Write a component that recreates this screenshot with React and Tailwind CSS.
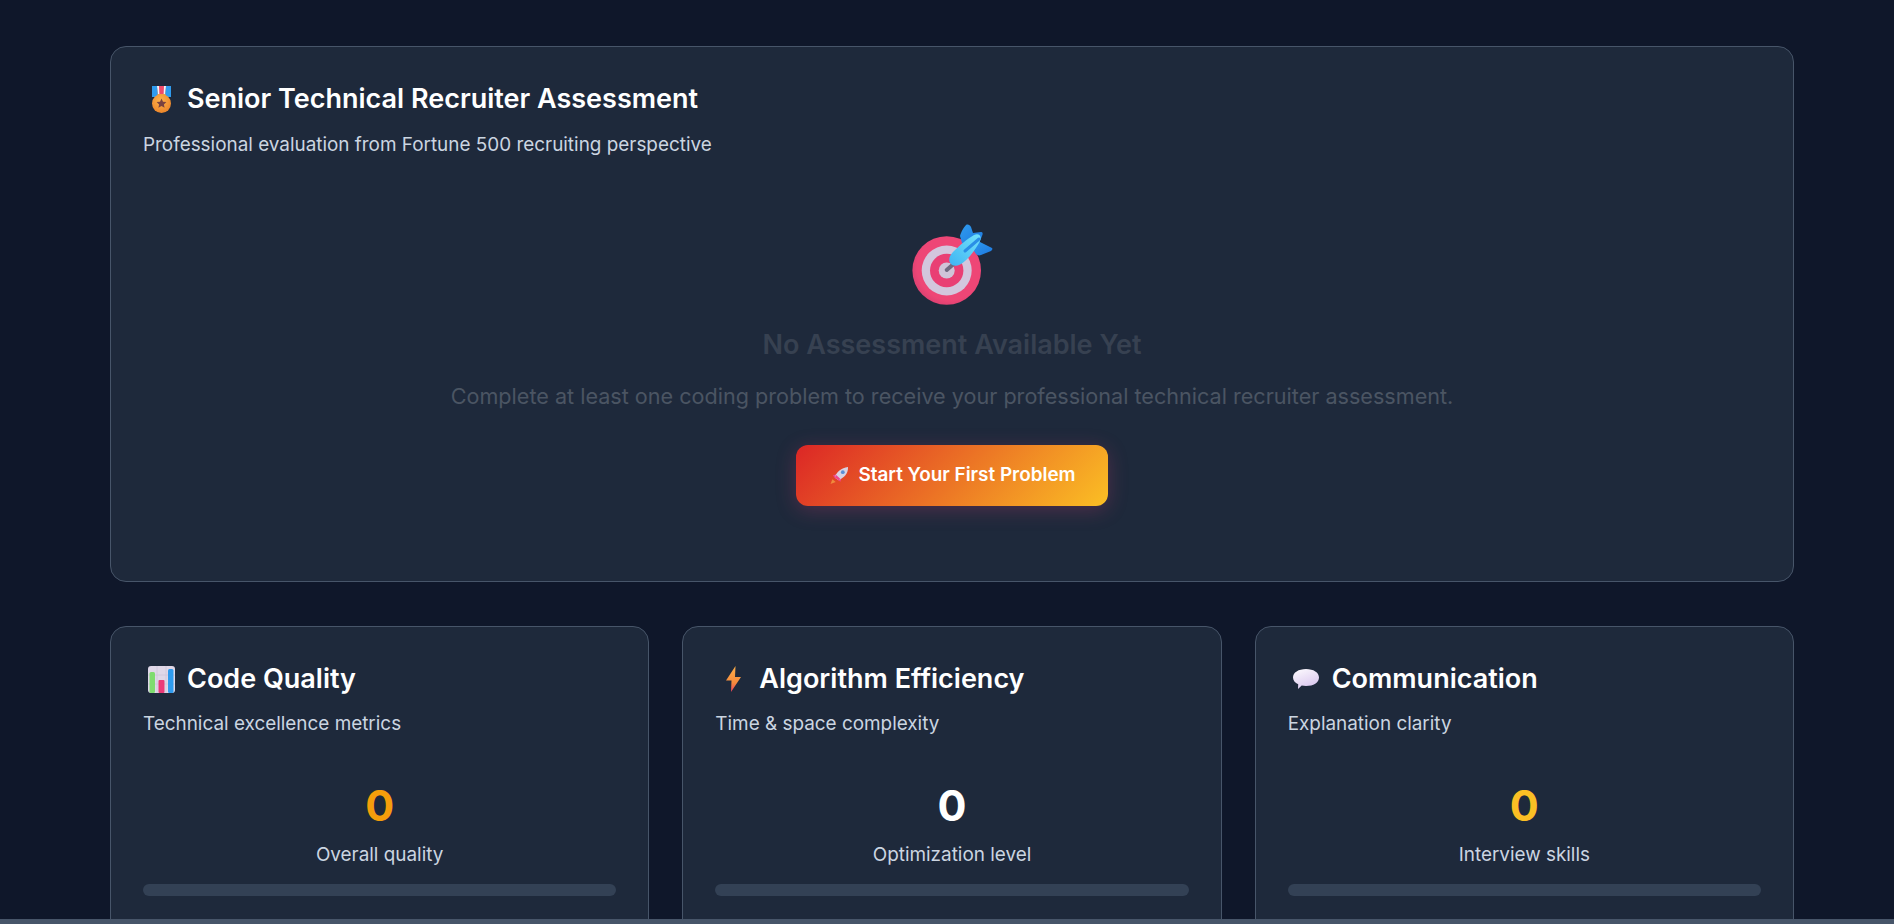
import React from "react";
const F = { fontFamily: 'Inter, sans-serif' };

function Medal() {
  return (
    <svg width="27" height="27" viewBox="0 0 27 27" className="shrink-0">
      <defs>
        <radialGradient id="mg" cx="0.45" cy="0.35" r="0.75"><stop offset="0" stopColor="#fdb24a" /><stop offset="1" stopColor="#ea7f26" /></radialGradient>
      </defs>
      <path d="M4 0h5l1 11H4z" fill="#2f9bee" />
      <path d="M18 0h5v11h-6z" fill="#2f9bee" />
      <path d="M9 0h9l-1 11h-7z" fill="#f4f1f6" />
      <path d="M11 0h5l-.5 11h-4z" fill="#ef4a6a" />
      <rect x="9.500" y="8" width="8" height="4" rx="1" fill="#f0a13c" />
      <circle cx="13.500" cy="17.500" r="9.500" fill="url(#mg)" />
      <path d="M13.500 12.500l1.500 3.200 3.400.4-2.500 2.300.7 3.400-3.100-1.700-3.100 1.700.7-3.400-2.500-2.300 3.400-.4z" fill="#7a4240" />
    </svg>
  );
}
function Target() {
  return (
    <svg width="84" height="82" viewBox="0 0 84 82">
      <defs>
        <linearGradient id="dg" x1="0" y1="1" x2="1" y2="0"><stop offset="0" stopColor="#3fb4f2" /><stop offset="1" stopColor="#72e2fb" /></linearGradient>
        <linearGradient id="fl" x1="0" y1="0" x2="1" y2="1"><stop offset="0" stopColor="#2f9bee" /><stop offset="1" stopColor="#1d78e0" /></linearGradient>
        <radialGradient id="tg" cx="0.550" cy="0.450" r="0.600"><stop offset="0.800" stopColor="#ee4676" /><stop offset="1" stopColor="#d83f70" /></radialGradient>
      </defs>
      <circle cx="36.700" cy="46.500" r="34.300" fill="url(#tg)" />
      <circle cx="36.700" cy="46.500" r="25" fill="#d3c6dd" />
      <circle cx="36.700" cy="46.500" r="16.700" fill="#e93f74" />
      <circle cx="36.700" cy="46.500" r="8" fill="#cfc4d8" />
      <path d="M36.700 46l8-7" stroke="#6f6a80" strokeWidth="4" strokeLinecap="round" />
      <path d="M50 12C51 8 54 3 56 1c2-1 4 0 5 2l2 6 8-1c2 0 2 2 1 4l-4 10-16-3z" fill="url(#fl)" />
      <path d="M68 17l14 7c1 1 0 2-1 3l-10 4c-2 1-4 0-5-1l-4-6z" fill="url(#fl)" />
      <path d="M43 28c6-6 14-13 21-17 5-2 8 1 6 6-3 6-9 15-15 20-5 5-11 6-14 3s-2-8 2-12z" fill="url(#dg)" />
      <path d="M55 27l14-12" stroke="#2a8fe6" strokeWidth="3" strokeLinecap="round" />
    </svg>
  );
}
function Rocket() {
  return (
    <svg width="19" height="17" viewBox="0 0 20 18" className="shrink-0">
      <path d="M0.500 18l2-5 3.500 3z" fill="#f08a3c" />
      <path d="M3 9l6-2.500-3 6z" fill="#f0468a" />
      <path d="M11 15.500l1.500-6.500-6 3.500z" fill="#f0468a" />
      <path d="M5 11C6.500 5.500 12 1 19 0c.5 7-4.500 11.500-10 14z" fill="#d8d2e2" />
      <path d="M5 11l4 3 2-1.400L6.500 8.500z" fill="#f0468a" />
      <circle cx="13.500" cy="5.500" r="2" fill="#5b8fd6" />
    </svg>
  );
}
function Chart() {
  return (
    <svg width="27" height="27" viewBox="0 0 27 27" className="shrink-0">
      <rect width="27" height="27" rx="3" fill="#e0d8e8" />
      <path d="M9 0v27M18 0v27M0 9h27M0 18h27" stroke="#cfc6da" strokeWidth="0.800" />
      <rect x="1.500" y="6" width="5.500" height="21" rx="1.500" fill="#7fdc6f" />
      <rect x="10.500" y="14" width="6" height="13" rx="1" fill="#ea3a78" />
      <rect x="20" y="3" width="5.500" height="24" rx="1.500" fill="#2f9bee" />
    </svg>
  );
}
function Bolt() {
  return (
    <svg width="15" height="26" viewBox="0 0 15 26" className="shrink-0">
      <defs>
        <linearGradient id="bg" x1="0.500" y1="0" x2="0.500" y2="1"><stop offset="0" stopColor="#fdb04a" /><stop offset="0.650" stopColor="#f58a3c" /><stop offset="1" stopColor="#ea3f5e" /></linearGradient>
      </defs>
      <path d="M9.500 0L0 14.500h5.500L5 26l10-15H9z" fill="url(#bg)" />
    </svg>
  );
}
function Bubble() {
  return (
    <svg width="26" height="20" viewBox="0 0 26 20" className="shrink-0">
      <defs>
        <linearGradient id="bb" x1="0.200" y1="0" x2="0.700" y2="1"><stop offset="0" stopColor="#fbf8fd" /><stop offset="1" stopColor="#d8c4ee" /></linearGradient>
      </defs>
      <path d="M13 0c7.500 0 13 3.500 13 8.500S20.500 17 13 17c-1.500 0-3 0-4.300-.4L5 20l.2-4.800C2 13.800 0 11.400 0 8.500 0 3.500 5.500 0 13 0z" fill="url(#bb)" />
    </svg>
  );
}

function Card({ icon, title, sub, value, color, label }) {
  return (
    <div className="flex-1 min-w-0 h-[340px] bg-[#1e293b] border border-[#475569] rounded-2xl p-8">
      <h3 className="flex items-center h-[39px] pt-px text-[27px] font-semibold text-white">
        <span className="w-[44px] flex items-center justify-center pr-[7px]">{icon}</span>
        {title}
      </h3>
      <p className="mt-[11px] text-[18.9px] leading-[30px] text-[#cbd5e1]">{sub}</p>
      <div className="mt-[35px] text-center">
        <div className={`text-[43px] leading-[62px] font-bold ${color}`}>{value}</div>
        <div className="mt-[4px] text-[18.9px] leading-[30px] text-[#cbd5e1]">{label}</div>
      </div>
      <div className="mt-[14px] h-3 rounded-md bg-[#334155]" />
    </div>
  );
}

export default function App() {
  return (
    <div style={F} className="relative h-[924px] overflow-hidden bg-[#0f172a]">
      <div className="ml-[110px] w-[1684px] pt-[46px]">
        <div className="h-[536px] bg-[#1e293b] border border-[#475569] rounded-2xl p-8">
          <h2 className="flex items-center h-[39px] pt-px text-[27px] font-semibold text-white">
            <span className="w-[44px] flex items-center justify-center pr-[7px]"><Medal /></span>
            Senior Technical Recruiter Assessment
          </h2>
          <p className="mt-[12px] text-[18.9px] leading-[30px] text-[#cbd5e1]">Professional evaluation from Fortune 500 recruiting perspective</p>
          <div className="flex flex-col items-center pt-[64px]">
            <Target />
            <div className="mt-[19px] text-[27px] leading-[40px] font-semibold text-[#374151]">No Assessment Available Yet</div>
            <div className="mt-[15px] text-[21.6px] leading-[32px] text-[#4b5563]">Complete at least one coding problem to receive your professional technical recruiter assessment.</div>
            <button className="mt-[33px] flex items-center justify-center gap-[9px] pl-[2px] h-[61px] w-[312px] rounded-xl text-white text-[18.9px] font-semibold bg-[linear-gradient(135deg,#dc2626,#fbbf24)] shadow-[0_4px_20px_rgba(229,62,120,0.25)]">
              <Rocket />Start Your First Problem
            </button>
          </div>
        </div>
        <div className="flex gap-[33px] mt-[44px]">
          <Card icon={<Chart />} title="Code Quality" sub="Technical excellence metrics" value="0" color="text-[#f59e0b]" label="Overall quality" />
          <Card icon={<Bolt />} title="Algorithm Efficiency" sub="Time & space complexity" value="0" color="text-white" label="Optimization level" />
          <Card icon={<Bubble />} title="Communication" sub="Explanation clarity" value="0" color="text-[#fbbf24]" label="Interview skills" />
        </div>
      </div>
      <div className="absolute bottom-0 inset-x-0 h-[5px] bg-[#475569]" />
    </div>
  );
}
